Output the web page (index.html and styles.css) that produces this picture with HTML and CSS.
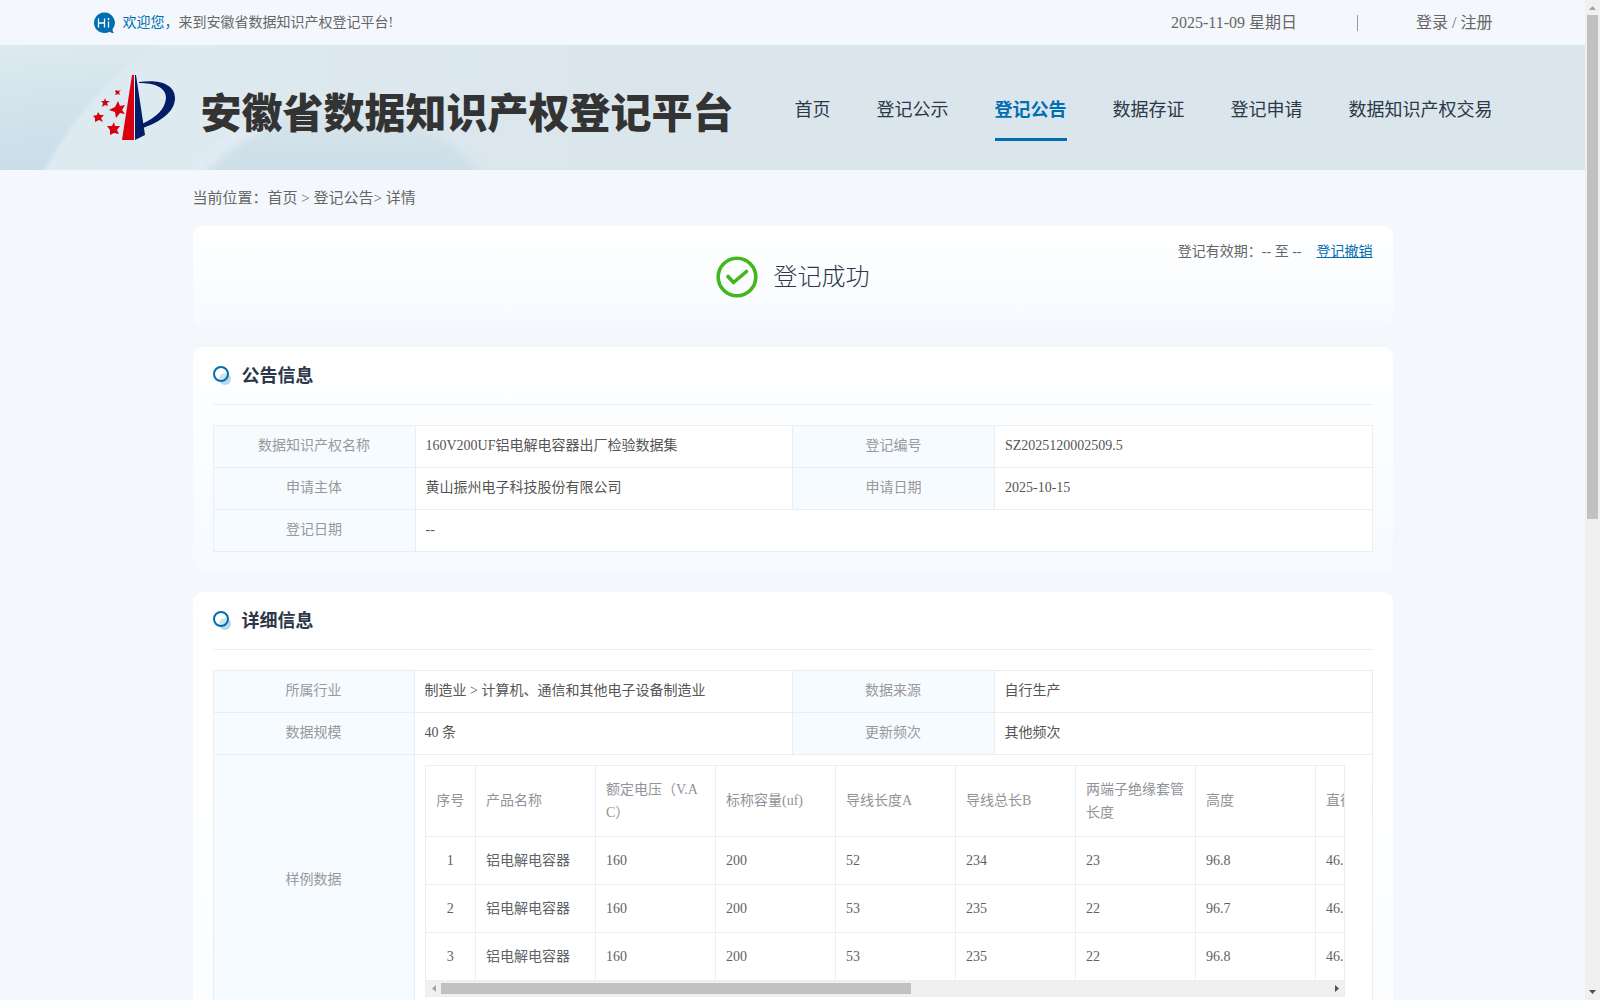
FILE: index.html
```html
<!DOCTYPE html>
<html lang="zh-CN">
<head>
  <meta charset="UTF-8" />
  <meta name="viewport" content="width=device-width, initial-scale=1" />
  <title>安徽省数据知识产权登记平台</title>
  <link rel="stylesheet" href="styles.css">
</head>
<body>

  <!-- Top bar -->
  <div class="topbar">
    <div class="wrap topbar-inner">
      <div class="welcome">
        <svg class="hi-icon" viewBox="0 0 22 22" aria-hidden="true">
          <path d="M11 0.500a10.300 10.300 0 1 0 5.500 19.200c1 .8 2.700 1.300 4.500 1.300-1-.9-1.500-2.200-1.500-3.700A10.300 10.300 0 0 0 11 .5z" fill="#006eb0" />
          <path d="M5.500 6.500v9M11.500 6.500v9M5.500 11h6M15.500 9.500v6" stroke="#fff" stroke-width="1.300" fill="none" />
          <circle cx="15.500" cy="7" r="1" fill="#fff" />
        </svg>
        <p><span class="blue">欢迎您，</span>来到安徽省数据知识产权登记平台!</p>
      </div>
      <div class="top-right">
        <span>2025-11-09 星期日</span>
        <i class="divider"></i>
        <span class="login"><a href="#">登录</a> / <a href="#">注册</a></span>
      </div>
    </div>
  </div>

  <!-- Header -->
  <header class="header">
    <svg class="header-bg" viewBox="0 0 640 125" preserveAspectRatio="none" aria-hidden="true">
      <defs>
        <linearGradient id="edge" x1="0" y1="0" x2="0.300" y2="1">
          <stop offset="0" stop-color="#ddebf0" />
          <stop offset="0.400" stop-color="#d4e4ec" />
          <stop offset="1" stop-color="#c8dce9" />
        </linearGradient>
        <linearGradient id="petal" x1="0" y1="0" x2="1" y2="0">
          <stop offset="0" stop-color="#deebf2" />
          <stop offset="0.850" stop-color="#dbe6ec" />
          <stop offset="1" stop-color="#dbe6ec" />
        </linearGradient>
        <linearGradient id="fold" x1="0" y1="0" x2="0" y2="1">
          <stop offset="0" stop-color="#dbe7ed" />
          <stop offset="0.600" stop-color="#cfe0e8" />
          <stop offset="1" stop-color="#cfdfe9" />
        </linearGradient>
        <filter id="soft"><feGaussianBlur stdDeviation="4" /></filter>
        <filter id="crisp"><feGaussianBlur stdDeviation="2" /></filter>
      </defs>
      <rect width="640" height="125" fill="url(#edge)" />
      <path d="M35 145C65 80 110 25 185 -20H700V145z" fill="url(#petal)" filter="url(#crisp)" />
      <path d="M200 134C240 92 290 62 340 58c60 0 110 34 146 76z" fill="url(#fold)" filter="url(#soft)" />
      <path d="M194 125C220 100 240 88 262 80" fill="none" stroke="#e4edf5" stroke-width="6" filter="url(#soft)" />
    </svg>
    <div class="wrap header-inner">
      <a class="logo" href="#">
        <svg class="logo-mark" viewBox="0 0 84 68" aria-hidden="true">
          <path d="M39 1L41 1V66H29z" fill="#d7000f" />
          <path d="M42 1L43 1L52 61L42 66z" fill="#001d66" />
          <path d="M46 8C66 5 82 10 82 24C82 38 67 48 50 54L49 50C64 43 72 35 73 24C73 13 61 9 46 9z" fill="#001d66" />
          <g fill="#d7000f">
            <path d="M25 27l2 5 5-1-3 5 3 4-5-1-4 5-1-6-6-2 6-3z" />
            <path d="M21 48l1 4 5 0-3 4 2 4-5-1-4 2 0-5-3-4 5 0z" />
            <path d="M5 38l2 3 4 0-3 3 2 4-4-2-4 2 0-4-2-2 4-1z" />
            <path d="M12 24l1 3 4 0-3 2 1 3-3-1-3 2 1-4-2-2 3 0z" />
            <path d="M24 16l1 1 3-1-2 2 1 3-2-1-3 1 1-2-1-2z" />
          </g>
        </svg>
        <span class="logo-text">安徽省数据知识产权登记平台</span>
      </a>
      <nav class="nav">
        <a href="#">首页</a>
        <a href="#">登记公示</a>
        <a href="#" class="active">登记公告</a>
        <a href="#">数据存证</a>
        <a href="#">登记申请</a>
        <a href="#">数据知识产权交易</a>
      </nav>
    </div>
  </header>

  <main class="main">
    <div class="crumbs">当前位置：<a href="#">首页</a> &gt; <a href="#">登记公告</a>&gt; 详情</div>

    <!-- Status -->
    <section class="card status">
      <svg class="ok-icon" viewBox="0 0 42 42" aria-hidden="true">
        <circle cx="21" cy="21" r="18.800" fill="none" stroke="#41b719" stroke-width="3.600" />
        <path d="M12 20.500l5.500 6L30.500 15.500" fill="none" stroke="#41b719" stroke-width="3.600" stroke-linecap="round" stroke-linejoin="round" />
      </svg>
      <span class="status-text">登记成功</span>
      <div class="validity"><span>登记有效期：-- 至 --</span><a href="#">登记撤销</a></div>
    </section>

    <!-- Announcement -->
    <section class="card">
      <h2 class="card-title">
        <svg viewBox="0 0 18 20" aria-hidden="true">
          <circle cx="12" cy="13" r="6" fill="#bcd8e9" />
          <circle cx="8" cy="8" r="7" fill="#fff" fill-opacity="0.300" stroke="#006eb0" stroke-width="2" />
        </svg>
        公告信息
      </h2>
      <table class="info">
        <colgroup><col class="col-label"><col><col class="col-label"><col></colgroup>
        <tr>
          <th>数据知识产权名称</th>
          <td>160V200UF铝电解电容器出厂检验数据集</td>
          <th>登记编号</th>
          <td>SZ2025120002509.5</td>
        </tr>
        <tr>
          <th>申请主体</th>
          <td>黄山振州电子科技股份有限公司</td>
          <th>申请日期</th>
          <td>2025-10-15</td>
        </tr>
        <tr>
          <th>登记日期</th>
          <td colspan="3">--</td>
        </tr>
      </table>
    </section>

    <!-- Details -->
    <section class="card details">
      <h2 class="card-title">
        <svg viewBox="0 0 18 20" aria-hidden="true">
          <circle cx="12" cy="13" r="6" fill="#bcd8e9" />
          <circle cx="8" cy="8" r="7" fill="#fff" fill-opacity="0.300" stroke="#006eb0" stroke-width="2" />
        </svg>
        详细信息
      </h2>
      <table class="info">
        <colgroup><col class="col-first"><col><col class="col-label"><col></colgroup>
        <tr>
          <th>所属行业</th>
          <td>制造业 &gt; 计算机、通信和其他电子设备制造业</td>
          <th>数据来源</th>
          <td>自行生产</td>
        </tr>
        <tr>
          <th>数据规模</th>
          <td>40 条</td>
          <th>更新频次</th>
          <td>其他频次</td>
        </tr>
        <tr>
          <th>样例数据</th>
          <td colspan="3">
            <div class="sample-box">
              <div class="sample-scroll">
                <table class="sample">
                  <thead>
                    <tr>
                      <th class="num">序号</th>
                      <th>产品名称</th>
                      <th>额定电压（V.AC）</th>
                      <th>标称容量(uf)</th>
                      <th>导线长度A</th>
                      <th>导线总长B</th>
                      <th>两端子绝缘套管长度</th>
                      <th>高度</th>
                      <th>直径</th>
                      <th class="rest"></th>
                    </tr>
                  </thead>
                  <tbody>
                    <tr><td class="num">1</td><td>铝电解电容器</td><td>160</td><td>200</td><td>52</td><td>234</td><td>23</td><td>96.8</td><td>46.5</td><td></td></tr>
                    <tr><td class="num">2</td><td>铝电解电容器</td><td>160</td><td>200</td><td>53</td><td>235</td><td>22</td><td>96.7</td><td>46.5</td><td></td></tr>
                    <tr><td class="num">3</td><td>铝电解电容器</td><td>160</td><td>200</td><td>53</td><td>235</td><td>22</td><td>96.8</td><td>46.5</td><td></td></tr>
                  </tbody>
                </table>
              </div>
              <div class="bar bar-x" aria-hidden="true">
                <svg viewBox="0 0 15 15"><path d="M10 4v7L6 7.500z" fill="#a3a3a3" /></svg>
                <div class="track"><div class="thumb"></div></div>
                <svg viewBox="0 0 15 15"><path d="M6 4v7L10 7.500z" fill="#505050" /></svg>
              </div>
            </div>
          </td>
        </tr>
      </table>
    </section>
  </main>

  <!-- Page scrollbar -->
  <div class="bar bar-y" aria-hidden="true">
    <svg viewBox="0 0 15 15"><path d="M4 10h7L7.500 6z" fill="#a3a3a3" /></svg>
    <div class="track"><div class="thumb"></div></div>
    <svg viewBox="0 0 15 15"><path d="M4 5h7L7.500 9z" fill="#505050" /></svg>
  </div>

</body>
</html>
```
FILE: styles.css
```css
:root {
  --blue: #006eb0;
  --dark: #2d3748;
  --text: #606266;
  --muted: #999;
  --line: #ebeef0;
  --page: #f4f8fd;
}

* {
  box-sizing: border-box;
}

body {
  margin: 0;
  padding-right: 15px;
  font-family: "Liberation Serif", "Noto Sans CJK SC", serif;
  font-size: 14px;
  color: #666;
  background: var(--page);
}

a {
  color: inherit;
  text-decoration: none;
}

.wrap {
  max-width: 1400px;
  margin: 0 auto;
}

.blue {
  color: var(--blue);
}

/* Top bar */
.topbar-inner {
  display: flex;
  align-items: center;
  justify-content: space-between;
  height: 45px;
}

.welcome {
  display: flex;
  align-items: center;
  gap: 8px;
}

.welcome p {
  margin: 0;
  padding-bottom: 4px;
}

.hi-icon {
  width: 22px;
  height: 22px;
}

.top-right {
  display: flex;
  align-items: center;
  padding-bottom: 4px;
  font-size: 16px;
}

.divider {
  width: 1px;
  height: 16px;
  margin: 4px 58px 0 60px;
  background: #999;
}

/* Header */
.header {
  position: relative;
  background: #dbe6ec;
}

.header-bg {
  position: absolute;
  left: 0;
  top: 0;
  width: 640px;
  height: 100%;
}

.header-inner {
  position: relative;
  display: flex;
  align-items: center;
  justify-content: space-between;
  height: 125px;
}

.logo {
  display: flex;
  align-items: center;
  gap: 24px;
}

.logo-mark {
  width: 84px;
  height: 68px;
}

.logo-text {
  padding-top: 4px;
  font-family: "Noto Sans CJK SC", sans-serif;
  font-size: 41px;
  font-weight: 900;
  line-height: 48px;
  color: #333;
  white-space: nowrap;
}

.nav {
  display: flex;
  gap: 46px;
}

.nav a {
  padding: 24px 0 16px;
  border-bottom: 3px solid transparent;
  font-size: 18px;
  line-height: 24px;
  color: var(--dark);
  white-space: nowrap;
}

.nav .active {
  font-weight: bold;
  color: var(--blue);
  border-color: var(--blue);
}

/* Content */
.main {
  max-width: 1200px;
  margin: 0 auto;
}

.crumbs {
  padding: 16px 0;
  font-size: 15px;
  line-height: 24px;
}

.card {
  margin-bottom: 20px;
  padding: 0 20px 20px;
  border-radius: 10px;
  background: linear-gradient(#fff, #f6faff);
}

.status {
  position: relative;
  display: flex;
  align-items: center;
  justify-content: center;
  gap: 16px;
  min-height: 101px;
  padding: 0 20px;
}

.ok-icon {
  width: 42px;
  height: 42px;
}

.status-text {
  padding-bottom: 4px;
  font-size: 24px;
  font-weight: 300;
  color: var(--dark);
}

.validity {
  position: absolute;
  top: 14px;
  right: 20px;
  display: flex;
  gap: 15px;
  line-height: 24px;
}

.validity a {
  color: var(--blue);
  text-decoration: underline;
}

.card-title {
  display: flex;
  align-items: center;
  gap: 11px;
  height: 58px;
  margin: 0 0 20px;
  padding-bottom: 4px;
  border-bottom: 1px solid #ebeef2;
  font-size: 18px;
  color: var(--dark);
}

.card-title svg {
  width: 18px;
  height: 20px;
  margin-top: 4px;
}

.details {
  padding-bottom: 1000px;
  background: linear-gradient(#fff, #f6faff);
}

/* Tables */
table {
  border-collapse: collapse;
  table-layout: fixed;
  width: 100%;
}

.info > tbody > tr > th,
.info > tbody > tr > td {
  height: 42px;
  padding: 9px 10px 11px;
  border: 1px solid var(--line);
  line-height: 20px;
}

.info > tbody > tr > th {
  font-weight: normal;
  color: var(--muted);
  background: #f6fbff;
}

.info > tbody > tr > td {
  color: #555;
  background: #fff;
}

.col-label {
  width: 202px;
}

.col-first {
  width: 201px;
}

/* Sample data */
.sample-box {
  margin: 1px 17px 0 0;
  border: 1px solid #ebeef5;
}

.sample-scroll {
  overflow-x: auto;
}

.sample {
  width: 1730px;
}

.sample th,
.sample td {
  width: 120px;
  height: 48px;
  padding: 0 10px;
  border: 1px solid #ebeef5;
  border-top: 0;
  border-left: 0;
  font-weight: normal;
  line-height: 23px;
  text-align: left;
  word-break: break-all;
  color: var(--text);
}

.sample th {
  height: 70px;
  color: #909399;
}

.sample .num {
  width: 50px;
  padding: 0;
  text-align: center;
}

.sample .rest {
  width: auto;
}

/* Scrollbars */
.bar {
  display: flex;
  background: #f0f0f0;
}

.bar svg {
  flex: none;
  width: 15px;
  height: 15px;
}

.track {
  flex: 1;
}

.thumb {
  background: #c1c1c1;
}

.bar-x .thumb {
  width: 53%;
  height: 11px;
  margin-top: 2px;
}

.bar-y {
  position: fixed;
  top: 0;
  right: 0;
  bottom: 0;
  flex-direction: column;
}

.bar-y .thumb {
  width: 11px;
  height: 52%;
  margin-left: 2px;
}
```
